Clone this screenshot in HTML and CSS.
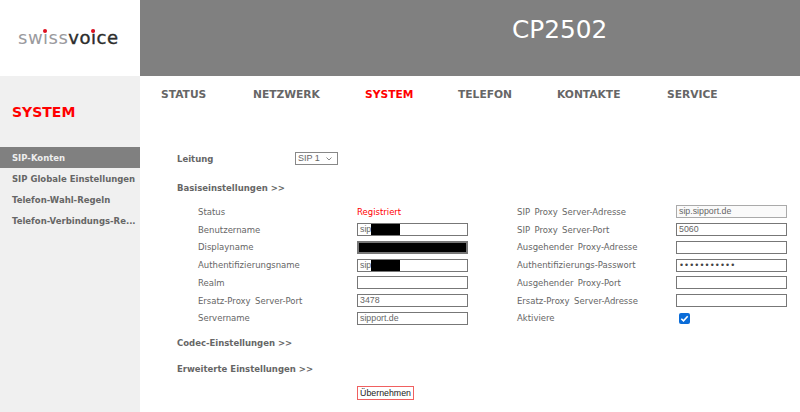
FILE: index.html
```html
<!DOCTYPE html>
<html lang="de">
<head>
<meta charset="utf-8">
<title>CP2502</title>
<link rel="stylesheet" href="styles.css">
</head>
<body>
<header class="top">
  <div class="logo"><span class="logo-text"><span class="logo-a">swiss</span><span class="logo-b">voice</span><i class="dot dot1"></i><i class="dot dot2"></i></span></div>
  <div class="banner">CP2502</div>
</header>
<div class="main">
  <aside class="side">
    <h1 class="side-title">SYSTEM</h1>
    <ul class="side-menu">
      <li class="active">SIP-Konten</li>
      <li>SIP Globale Einstellungen</li>
      <li>Telefon-Wahl-Regeln</li>
      <li>Telefon-Verbindungs-Re...</li>
    </ul>
  </aside>
  <div class="content">
    <nav class="nav">
      <a class="n1">STATUS</a><a class="n2">NETZWERK</a><a class="n3 cur">SYSTEM</a><a class="n4">TELEFON</a><a class="n5">KONTAKTE</a><a class="n6">SERVICE</a>
    </nav>
    <div class="line-row">
      <span class="head">Leitung</span>
      <span class="fake-select">SIP 1<svg class="chev" width="6" height="4" viewBox="0 0 6 4"><path d="M.5.5L3 3 5.500.5" fill="none" stroke="#888" stroke-width="1"/></svg></span>
    </div>
    <div class="head section">Basiseinstellungen &gt;&gt;</div>
    <div class="grid">
      <span class="lab">Status</span><span class="status">Registriert</span>
      <span class="lab">SIP Proxy Server-Adresse</span><span class="inp ro">sip.sipport.de</span>

      <span class="lab">Benutzername</span><span class="inp">sip<b class="mask"></b></span>
      <span class="lab">SIP Proxy Server-Port</span><span class="inp">5060</span>

      <span class="lab">Displayname</span><span class="inp full"><b class="mask wide"></b></span>
      <span class="lab">Ausgehender Proxy-Adresse</span><span class="inp"></span>

      <span class="lab">Authentifizierungsname</span><span class="inp">sip<b class="mask"></b></span>
      <span class="lab">Authentifizierungs-Passwort</span><span class="inp pw">•••••••••••</span>

      <span class="lab">Realm</span><span class="inp"></span>
      <span class="lab">Ausgehender Proxy-Port</span><span class="inp"></span>

      <span class="lab">Ersatz-Proxy Server-Port</span><span class="inp">3478</span>
      <span class="lab">Ersatz-Proxy Server-Adresse</span><span class="inp"></span>

      <span class="lab">Servername</span><span class="inp">sipport.de</span>
      <span class="lab">Aktiviere</span><span class="check"><svg width="11" height="11" viewBox="0 0 11 11"><rect width="11" height="11" rx="2" fill="#0a6cd8"/><path d="M2.3 5.7l2.200 2.200 4.200-4.600" fill="none" stroke="#fff" stroke-width="1.600"/></svg></span>
    </div>
    <div class="head codec">Codec-Einstellungen &gt;&gt;</div>
    <div class="head adv">Erweiterte Einstellungen &gt;&gt;</div>
    <div class="submit-row"><span class="btn">Übernehmen</span></div>
  </div>
</div>
</body>
</html>
```
FILE: styles.css
```css
* { box-sizing: border-box; }
html, body { margin: 0; padding: 0; }
body {
  width: 800px;
  height: 412px;
  overflow: hidden;
  background: #fff;
  font-family: "DejaVu Sans", Verdana, sans-serif;
  font-size: 8.5px;
  color: #666;
}
.top { display: flex; height: 76px; }
.logo {
  width: 140px;
  background: #fff;
  padding: 27px 0 0 18px;
}
.logo-text {
  display: inline-block;
  position: relative;
  font-family: "DejaVu Sans", sans-serif;
  font-size: 18px;
  line-height: 22px;
  height: 22px;
  letter-spacing: 0.5px;
  white-space: nowrap;
}
.logo-a { color: #9a9a9e; }
.logo-b { color: #2c2c2c; -webkit-text-stroke: 0.4px #2c2c2c; }
.dot { position: absolute; width: 4px; height: 4px; border-radius: 50%; background: #e01020; top: 2px; }
.dot1 { left: 25px; }
.dot2 { left: 73px; }
.banner {
  flex: 1;
  background: #808080;
  color: #fff;
  font-size: 24.800px;
  line-height: 28px;
  padding: 16px 0 0 372px;
}
.main { display: flex; height: 336px; }
.side { width: 140px; background: #f0f0f0; }
.side-title {
  margin: 0;
  height: 71px;
  padding: 28px 0 0 12px;
  font-size: 14px;
  line-height: 17px;
  font-weight: bold;
  color: #f00;
}
.side-menu { list-style: none; margin: 0; padding: 0; }
.side-menu li {
  height: 21px;
  line-height: 22px;
  padding-left: 12px;
  font-weight: bold;
  white-space: nowrap;
  color: #666;
}
.side-menu li.active { background: #808080; color: #eee; }
.content { flex: 1; position: relative; }
.nav {
  display: flex;
  height: 64px;
  padding: 12px 0 0 21px;
  font-size: 10.700px;
  line-height: 14px;
  font-weight: bold;
  color: #666;
}
.n1 { width: 92px; }
.n2 { width: 112px; }
.n3 { width: 93px; }
.n4 { width: 99px; }
.n5 { width: 110px; }
.cur { color: #f00; }
.head { font-weight: bold; color: #666; }
.line-row { display: flex; align-items: center; height: 13px; padding-left: 37px; margin-top: 12px; }
.line-row .head { width: 118px; }
.fake-select {
  width: 43px;
  height: 13px;
  border: 1px solid #888;
  font-family: "Liberation Sans", Arial, sans-serif;
  font-size: 9px;
  line-height: 11px;
  padding-left: 2px;
  position: relative;
  color: #666;
}
.chev { position: absolute; right: 5px; top: 4px; }
.section { padding-left: 37px; margin-top: 17px; line-height: 13px; }
.grid {
  display: grid;
  grid-template-columns: 159px 160px 159px 111px;
  grid-auto-rows: 17.750px;
  margin: 8px 0 0 58px;
  align-items: center;
}
.lab { line-height: 12px; word-spacing: 1.700px; }
.status { color: #f00; }
.inp {
  display: flex;
  align-items: center;
  width: 111px;
  height: 13px;
  border: 1px solid #777;
  padding-left: 2px;
  font-family: "Liberation Sans", Arial, sans-serif;
  font-size: 8.800px;
  line-height: 11px;
  color: #666;
  background: #fff;
  white-space: nowrap;
  overflow: hidden;
}
.ro { border-color: #aaa; background: #fafafa; }
.mask { display: inline-block; width: 29px; height: 11px; background: #000; }
.full { padding: 0; border-color: #777; border-width: 2px; }
.mask.wide { width: 100%; height: 9px; }
.pw { font-family: "DejaVu Sans", sans-serif; font-size: 8.500px; letter-spacing: 0.1px; color: #444; }
.check { display: flex; padding-left: 3px; }
.codec { padding-left: 37px; margin-top: 10px; line-height: 13px; }
.adv { padding-left: 37px; margin-top: 13px; line-height: 13px; }
.submit-row { padding-left: 217px; margin-top: 10px; }
.btn {
  display: inline-block;
  width: 57px;
  height: 14px;
  border: 1px solid #f06060;
  text-align: center;
  font-family: "Liberation Sans", Arial, sans-serif;
  font-size: 8.800px;
  line-height: 13px;
  color: #222;
}
```
